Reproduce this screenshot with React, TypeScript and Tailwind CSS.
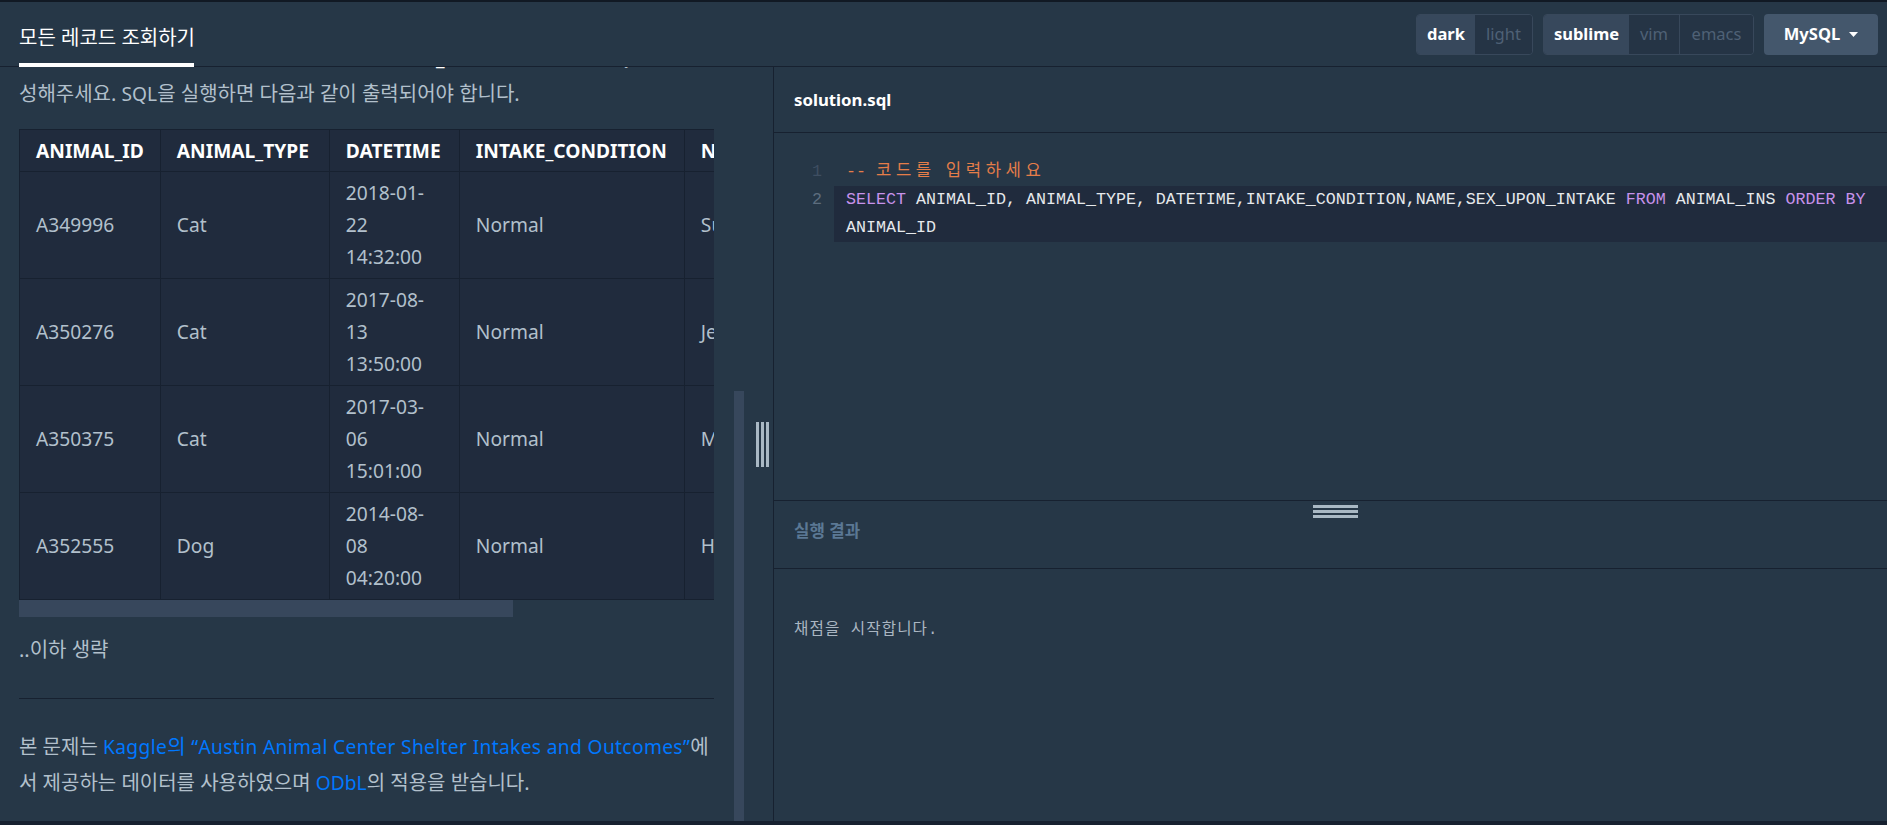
import React from "react";

const rows = [
  { id: "A349996", type: "Cat", d: ["2018-01-", "22", "14:32:00"], cond: "Normal", name: "Sugar", sex: "Neutered Male" },
  { id: "A350276", type: "Cat", d: ["2017-08-", "13", "13:50:00"], cond: "Normal", name: "Jewel", sex: "Spayed Female" },
  { id: "A350375", type: "Cat", d: ["2017-03-", "06", "15:01:00"], cond: "Normal", name: "Meo", sex: "Neutered Male" },
  { id: "A352555", type: "Dog", d: ["2014-08-", "08", "04:20:00"], cond: "Normal", name: "Harley", sex: "Spayed Female" },
];

function K({ children }: { children: React.ReactNode }) {
  return <span className="text-[20px]">{children}</span>;
}

function Bars({ vertical }: { vertical?: boolean }) {
  if (vertical) {
    return (
      <div className="flex h-[45px] gap-[2px]">
        <span className="w-[3px] bg-[#a9b8c4]" />
        <span className="w-[3px] bg-[#a9b8c4]" />
        <span className="w-[3px] bg-[#a9b8c4]" />
      </div>
    );
  }
  return (
    <div className="flex w-[45px] flex-col gap-[2px]">
      <span className="h-[3px] bg-[#a9b8c4]" />
      <span className="h-[3px] bg-[#a9b8c4]" />
      <span className="h-[3px] bg-[#a9b8c4]" />
    </div>
  );
}

export default function App() {
  const th = "border border-[#172130] px-[16px] pt-[5px] pb-[4px] text-left font-bold text-white whitespace-nowrap";
  const td = "border border-[#172130] px-[16px] py-[5px] text-left align-middle";
  return (
    <div className="flex h-[825px] w-full flex-col overflow-hidden bg-[#263747] font-['Noto_Sans','Noto_Sans_CJK_KR',sans-serif]">
      <div className="h-[2px] shrink-0 bg-[#111924]" />
      <header className="flex h-[65px] shrink-0 items-stretch justify-between border-b border-[#172130] pl-[19px] pr-[9px]">
        <div className="-mb-px flex w-[175px] items-center whitespace-nowrap border-b-4 border-white pt-[10px] text-[20px] text-white">
          모든 레코드 조회하기
        </div>
        <div className="flex items-center gap-[10px] text-[16.5px]">
          <div className="flex h-[41px] overflow-hidden rounded-[4px] border border-[#38485b]">
            <span className="flex w-[58px] items-center justify-center bg-[#37485c] font-bold text-white">dark</span>
            <span className="flex w-[57px] items-center justify-center bg-[#253445] text-[#4f6176]">light</span>
          </div>
          <div className="flex h-[41px] overflow-hidden rounded-[4px] border border-[#38485b]">
            <span className="flex w-[85px] items-center justify-center bg-[#37485c] font-bold text-white">sublime</span>
            <span className="flex w-[50px] items-center justify-center bg-[#253445] text-[#4f6176]">vim</span>
            <span className="w-px bg-[#38485b]" />
            <span className="flex w-[73px] items-center justify-center bg-[#253445] text-[#4f6176]">emacs</span>
          </div>
          <div className="flex h-[41px] w-[114px] items-center justify-center gap-[9px] rounded-[4px] bg-[#44576c] font-bold text-white">
            <span>MySQL</span>
            <svg width="9" height="5" viewBox="0 0 9 5"><path d="M0 0h9L4.5 5z" fill="#ffffff" /></svg>
          </div>
        </div>
      </header>

      <div className="flex min-h-0 flex-1">
        <div className="flex w-[774px] shrink-0 border-r border-[#172130]">
          <div className="w-[714px] shrink-0 overflow-hidden pl-[19px] text-[19.2px] leading-[36px] text-[#b2c0cc]">
            <div className="-mt-[27px]">
              <p className="whitespace-nowrap">
                <K>동물 보호소에 들어온 모든 동물의 정보를 </K>
                <span className="text-white">ANIMAL_ID</span>
                <K>순으로 조회하는 </K>SQL<K>문을 작</K>
                <br />
                <K>성해주세요. </K>SQL<K>을 실행하면 다음과 같이 출력되어야 합니다.</K>
              </p>
              <div className="mt-[17px] w-[695px] overflow-hidden">
                <table className="w-full border-collapse bg-[#202b3d] leading-[32px]">
                  <thead>
                    <tr>
                      <th className={th}><div className="min-w-[106px]">ANIMAL_ID</div></th>
                      <th className={th}><div className="min-w-[136px]">ANIMAL_TYPE</div></th>
                      <th className={th}><div className="min-w-[97px]">DATETIME</div></th>
                      <th className={th}><div className="min-w-[192px]">INTAKE_CONDITION</div></th>
                      <th className={th}>NAME</th>
                      <th className={th}>SEX_UPON_INTAKE</th>
                    </tr>
                  </thead>
                  <tbody>
                    {rows.map((r) => (
                      <tr key={r.id}>
                        <td className={td}>{r.id}</td>
                        <td className={td}>{r.type}</td>
                        <td className={td}>
                          {r.d[0]}
                          <br />
                          {r.d[1]}
                          <br />
                          {r.d[2]}
                        </td>
                        <td className={td}>{r.cond}</td>
                        <td className={td}>{r.name}</td>
                        <td className={td}>{r.sex}</td>
                      </tr>
                    ))}
                  </tbody>
                </table>
                <div className="h-[17px] w-[494px] bg-[#37475c]" />
              </div>
              <p className="mt-[15px]">
                <K>..이하 생략</K>
              </p>
              <hr className="mt-[30px] w-[695px] border-0 border-t border-[#172130]" />
              <p className="mt-[30px] whitespace-nowrap">
                <K>본 문제는 </K>
                <span className="tracking-[0.35px] text-[#0078ff]">
                  Kaggle<K>의</K> “Austin Animal Center Shelter Intakes and Outcomes”
                </span>
                <K>에</K>
                <br />
                <K>서 제공하는 데이터를 사용하였으며 </K>
                <span className="text-[#0078ff]">ODbL</span>
                <K>의 적용을 받습니다.</K>
              </p>
            </div>
          </div>
          <div className="flex w-[31px] shrink-0 flex-col pl-[20px] pt-[324px]">
            <div className="w-[10px] flex-1 bg-[#37475c]" />
          </div>
          <div className="flex w-[28px] shrink-0 items-center pl-[11px]">
            <Bars vertical />
          </div>
        </div>

        <div className="flex min-w-0 flex-1 flex-col">
          <div className="flex h-[66px] shrink-0 items-center border-b border-[#172130] pl-[20px] text-[16.8px] font-bold text-white">
            solution.sql
          </div>
          <div className="h-[368px] shrink-0 border-b border-[#172130] pt-[25px] font-['Liberation_Mono','Noto_Sans_CJK_KR',monospace] text-[16.67px] leading-[28px]">
            <div className="flex">
              <div className="w-[60px] shrink-0 pr-[12px] text-right text-[#3e4e61]">1</div>
              <div className="min-w-0 flex-1 whitespace-pre pl-[12px] text-[#e57d49]">
                {"-- "}
                <span className="tracking-[4.6px]">코드를</span>
                {" "}
                <span className="tracking-[4.6px]">입력하세요</span>
              </div>
            </div>
            <div className="flex items-start">
              <div className="w-[60px] shrink-0 pr-[12px] text-right text-[#5d6d7e]">2</div>
              <div className="min-w-0 flex-1 whitespace-pre-wrap bg-[#202b3d] pl-[12px] text-[#e6e9ec]">
                <span className="text-[#c792ea]">SELECT</span>
                {" ANIMAL_ID, ANIMAL_TYPE, DATETIME,INTAKE_CONDITION,NAME,SEX_UPON_INTAKE "}
                <span className="text-[#c792ea]">FROM</span>
                {" ANIMAL_INS "}
                <span className="text-[#c792ea]">ORDER BY</span>
                {" ANIMAL_ID"}
              </div>
            </div>
          </div>
          <div className="relative h-[68px] shrink-0 border-b border-[#172130] pl-[20px] pt-[18px] text-[16.8px] font-bold leading-[24px] text-[#5b7894]">
            <div className="absolute left-[539px] top-[4px]">
              <Bars />
            </div>
            실행 결과
          </div>
          <div className="flex-1 pl-[20px] pt-[49px] font-['Liberation_Mono','Noto_Sans_CJK_KR',monospace] text-[15.6px] leading-[24px] tracking-[1.1px] text-[#aab6c2]">
            채점을 시작합니다.
          </div>
        </div>
      </div>
      <div className="h-[4px] shrink-0 bg-[#172130]" />
    </div>
  );
}
